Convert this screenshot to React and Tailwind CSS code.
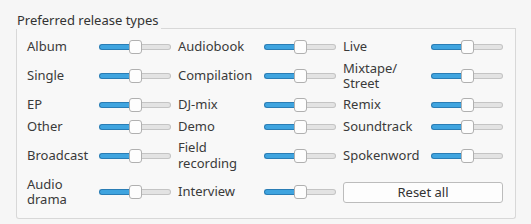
const types = [
  ['Album', 'Audiobook', 'Live'],
  ['Single', 'Compilation', 'Mixtape/\nStreet'],
  ['EP', 'DJ-mix', 'Remix'],
  ['Other', 'Demo', 'Soundtrack'],
  ['Broadcast', 'Field\nrecording', 'Spokenword'],
  ['Audio\ndrama', 'Interview', null],
];

function Slider() {
  return (
    <div className="flex h-4 w-[72px] items-center">
      <div className="h-[6px] w-[31px] rounded-l-full border border-r-0 border-[#2a7db5] bg-[#3fa4df]" />
      <div className="z-10 -mx-px h-[14px] w-[13px] shrink-0 rounded-[3px] border border-[#b0b0b0] bg-[#fdfdfd]" />
      <div className="h-[6px] flex-1 rounded-r-full border border-l-0 border-[#c4c4c4] bg-[#e3e3e3]" />
    </div>
  );
}

function Label({ text }) {
  return <div className="whitespace-pre-line leading-[15.5px]">{text}</div>;
}

export default function App() {
  return (
    <div className="min-h-screen w-[531px] bg-[#f6f6f6] pt-[12px] pl-4 text-[13px] text-[#3a3a3a] [font-family:'Noto_Sans',sans-serif]">
      <div className="w-[500px]">
        <div className="flex h-[17px]">
          <span className="pl-px pr-[2px] leading-[16px] text-[#333]">Preferred release types</span>
          <div className="flex-1 rounded-tr-[3px] border-b border-[#d8d8d8]" />
        </div>
        <div className="rounded-b-[3px] border-x border-b border-[#d8d8d8] bg-[#f8f8f8] pt-[10px] pb-[10px] pl-[10px]">
          <div className="grid grid-cols-[72px_79px_86px_79px_88px_72px] items-center gap-y-[5.5px]">
            {types.map((row, i) => (
              <div key={i} className="contents">
                <Label text={row[0]} />
                <Slider />
                <Label text={row[1]} />
                <Slider />
                {row[2] ? (
                  <>
                    <Label text={row[2]} />
                    <Slider />
                  </>
                ) : (
                  <button className="col-span-2 h-[21px] rounded-[3px] border border-[#bcbcbc] bg-[#fdfdfd] text-[#333]">
                    Reset all
                  </button>
                )}
              </div>
            ))}
          </div>
        </div>
      </div>
    </div>
  );
}
